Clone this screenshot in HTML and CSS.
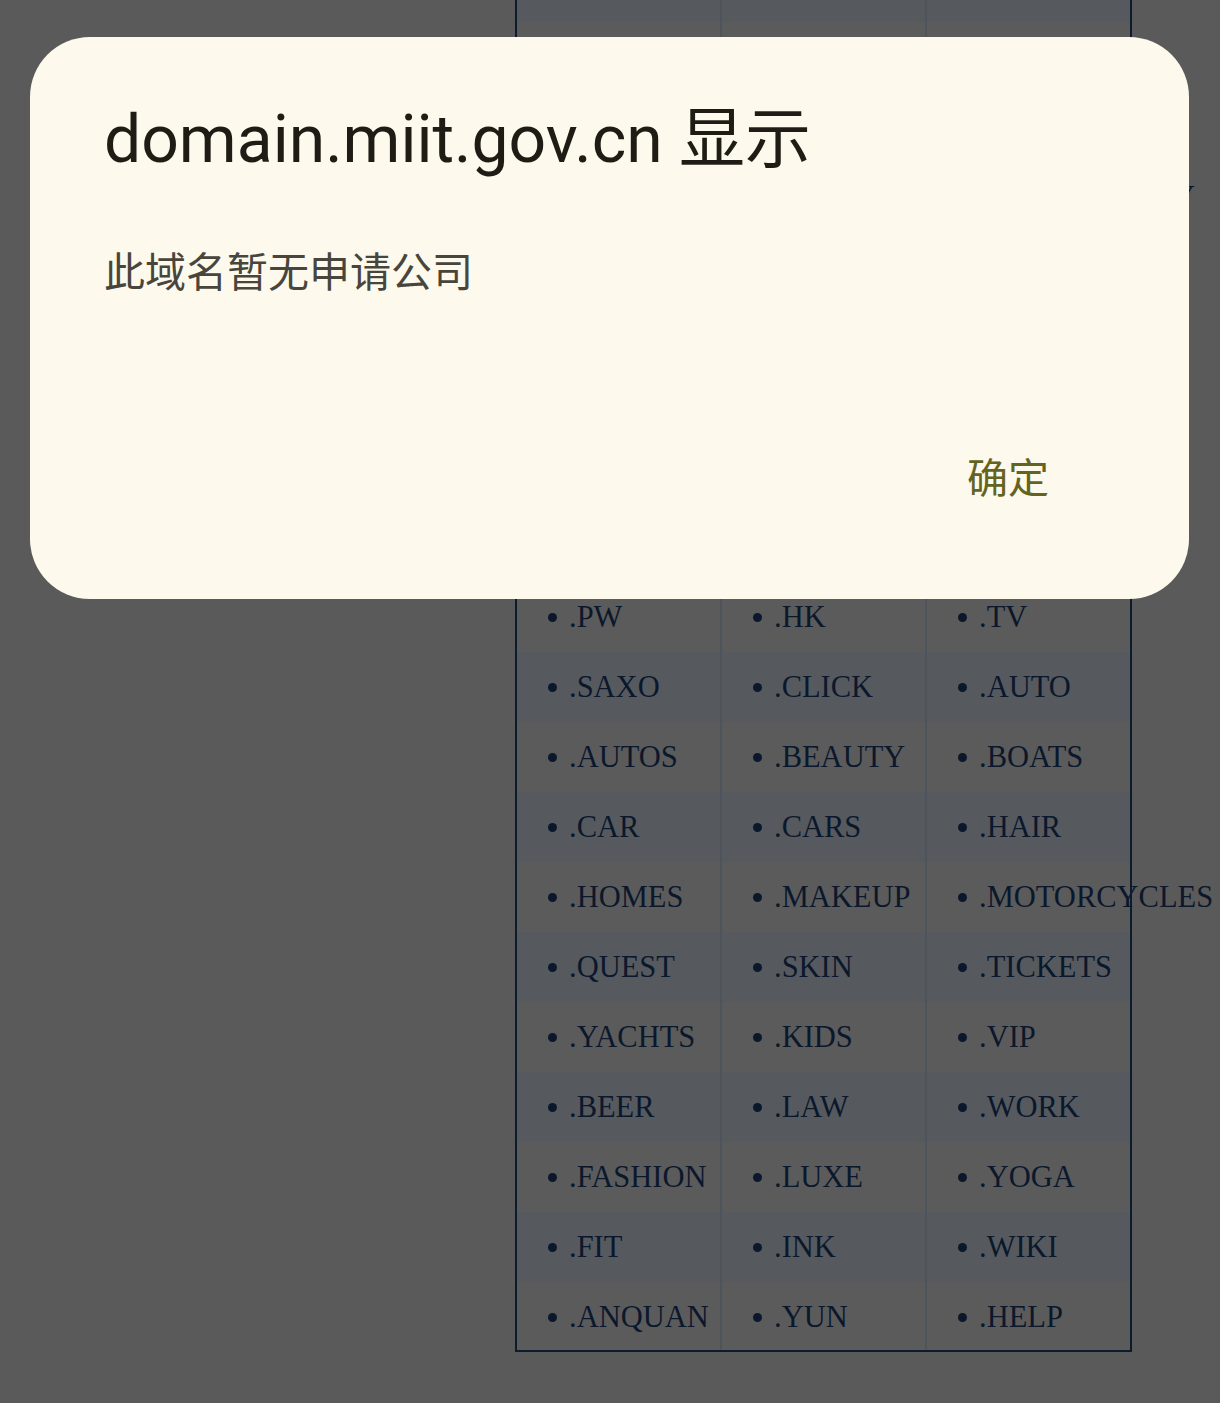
FILE: index.html
```html
<!DOCTYPE html>
<html lang="zh-CN">
<head>
  <meta charset="UTF-8" />
  <meta name="viewport" content="width=device-width, initial-scale=1" />
  <title>域名查询</title>
  <link rel="stylesheet" href="styles.css">
</head>
<body>

  <div class="page">
    <div class="tld-table">
      <div class="row alt"><div class="cell">.TOP</div><div class="cell">.XYZ</div><div class="cell">.SITE</div></div>
      <div class="row"><div class="cell">.COM</div><div class="cell">.NET</div><div class="cell">.ORG</div></div>
      <div class="row alt"><div class="cell">.CN</div><div class="cell">.INFO</div><div class="cell">.BIZ</div></div>
      <div class="row"><div class="cell">.SHOP</div><div class="cell">.STORE</div><div class="cell">.TECHNOLOGY</div></div>
      <div class="row alt"><div class="cell">.ONLINE</div><div class="cell">.CLUB</div><div class="cell">.FUN</div></div>
      <div class="row"><div class="cell">.LINK</div><div class="cell">.LIFE</div><div class="cell">.LIVE</div></div>
      <div class="row alt"><div class="cell">.CC</div><div class="cell">.ME</div><div class="cell">.MOBI</div></div>
      <div class="row"><div class="cell">.ASIA</div><div class="cell">.NEWS</div><div class="cell">.RED</div></div>
      <div class="row alt"><div class="cell">.CO</div><div class="cell">.IO</div><div class="cell">.SPACE</div></div>
      <div class="row"><div class="cell">.PW</div><div class="cell">.HK</div><div class="cell">.TV</div></div>
      <div class="row alt"><div class="cell">.SAXO</div><div class="cell">.CLICK</div><div class="cell">.AUTO</div></div>
      <div class="row"><div class="cell">.AUTOS</div><div class="cell">.BEAUTY</div><div class="cell">.BOATS</div></div>
      <div class="row alt"><div class="cell">.CAR</div><div class="cell">.CARS</div><div class="cell">.HAIR</div></div>
      <div class="row"><div class="cell">.HOMES</div><div class="cell">.MAKEUP</div><div class="cell">.MOTORCYCLES</div></div>
      <div class="row alt"><div class="cell">.QUEST</div><div class="cell">.SKIN</div><div class="cell">.TICKETS</div></div>
      <div class="row"><div class="cell">.YACHTS</div><div class="cell">.KIDS</div><div class="cell">.VIP</div></div>
      <div class="row alt"><div class="cell">.BEER</div><div class="cell">.LAW</div><div class="cell">.WORK</div></div>
      <div class="row"><div class="cell">.FASHION</div><div class="cell">.LUXE</div><div class="cell">.YOGA</div></div>
      <div class="row alt"><div class="cell">.FIT</div><div class="cell">.INK</div><div class="cell">.WIKI</div></div>
      <div class="row"><div class="cell">.ANQUAN</div><div class="cell">.YUN</div><div class="cell">.HELP</div></div>
    </div>
  </div>

  <div class="dialog" role="alertdialog">
    <h2 class="dialog-title">domain.miit.gov.cn 显示</h2>
    <p class="dialog-msg">此域名暂无申请公司</p>
    <div class="dialog-actions">
      <button class="dialog-btn">确定</button>
    </div>
  </div>

</body>
</html>
```

FILE: styles.css
```css
* {
  box-sizing: border-box;
  margin: 0;
  padding: 0;
}

body {
  background-color: #5a5a5a;
  font-family: "Liberation Serif", serif;
  overflow: hidden;
  height: 1403px;
}

.page {
  padding-left: 515px;
}

/* tabla de dominios (atenuada por el dialogo) */
.tld-table {
  width: 617px;
  margin-top: -48px;
  outline: 2px solid #0d1b2f;
  outline-offset: -2px;
}

.row {
  display: grid;
  grid-template-columns: 205px 205px 207px;
  height: 70px;
  background-color: #5b5b5b;
}

.row.alt {
  background-color: #565a5f;
}

.cell {
  display: flex;
  align-items: center;
  gap: 12px;
  padding-left: 33px;
  white-space: nowrap;
  font-size: 30.5px;
  color: #0b182c;
}

.cell + .cell {
  border-left: 2px solid #4e545b;
  padding-left: 31px;
}

.cell::before {
  content: "";
  width: 9px;
  height: 9px;
  border-radius: 50%;
  background-color: #0b182c;
  flex-shrink: 0;
}

/* dialogo de alerta */
.dialog {
  position: fixed;
  top: 37px;
  left: 30px;
  width: 1159px;
  height: 562px;
  background-color: #fdf9ec;
  border-radius: 60px;
  padding: 63px 74px 0;
  display: flex;
  flex-direction: column;
}

.dialog-title {
  font-family: Roboto, "Noto Sans CJK SC", sans-serif;
  font-weight: 400;
  font-size: 66px;
  line-height: 80px;
  color: #1e1c14;
}

.dialog-msg {
  margin-top: 64px;
  font-family: "Noto Sans CJK SC", sans-serif;
  font-size: 41px;
  line-height: 50px;
  color: #48463c;
}

.dialog-actions {
  display: flex;
  justify-content: flex-end;
  margin-top: 156px;
  padding-right: 42px;
}

.dialog-btn {
  background: none;
  border: none;
  padding: 0 24px;
  font-family: "Noto Sans CJK SC", sans-serif;
  font-size: 41px;
  line-height: 50px;
  color: #646420;
  cursor: pointer;
}
```
